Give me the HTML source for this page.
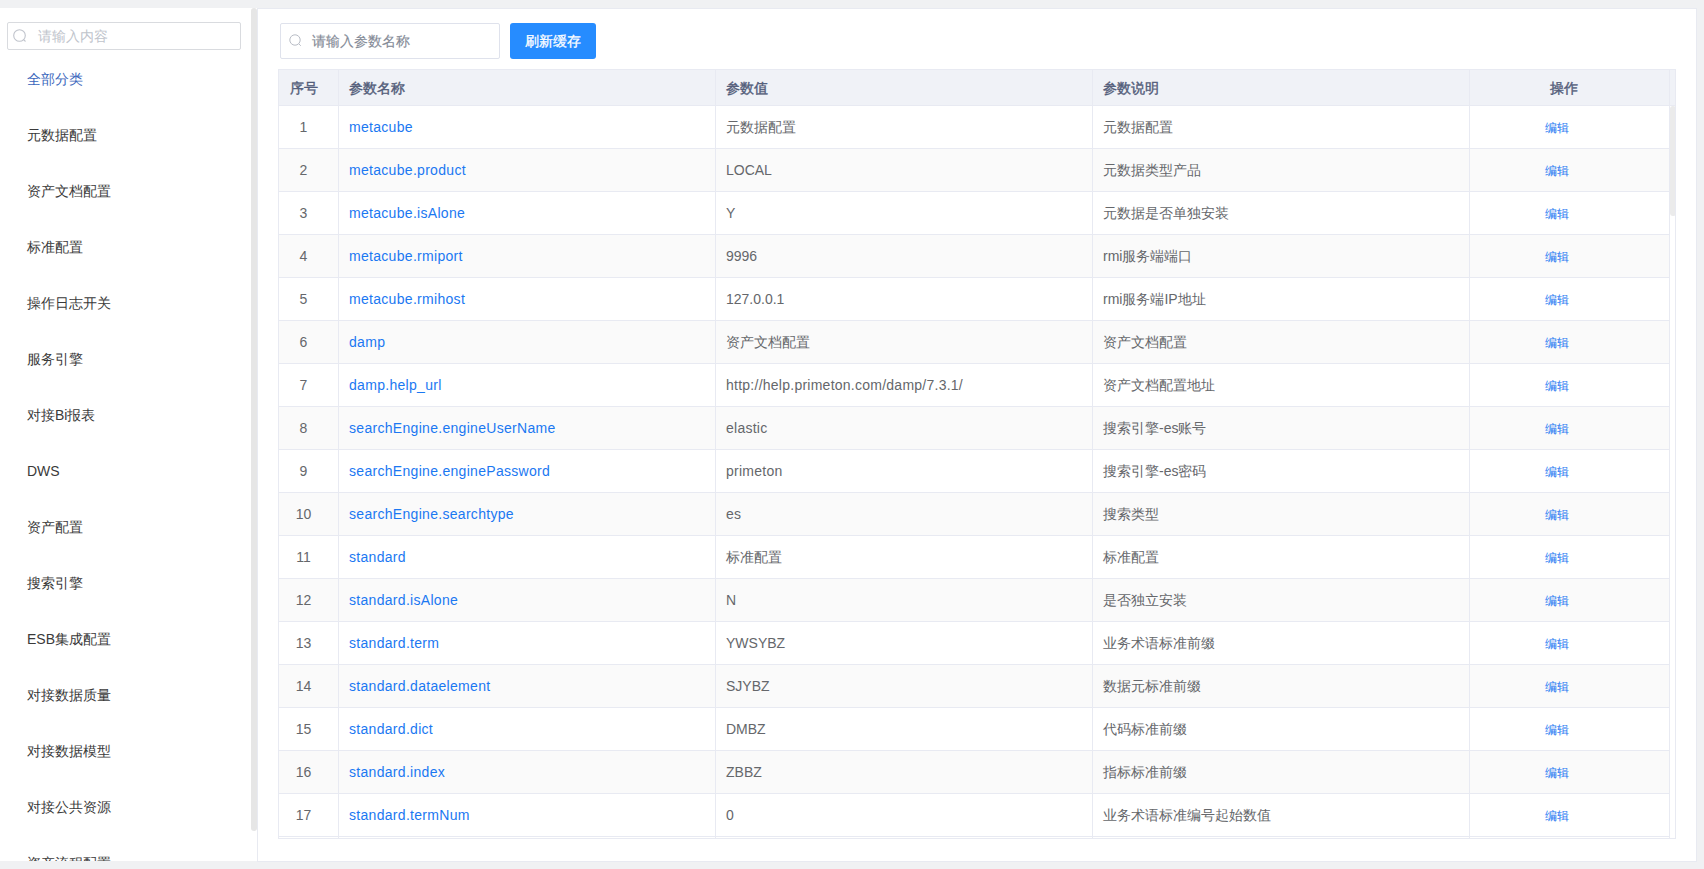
<!DOCTYPE html><html><head><meta charset="utf-8"><style>
*{margin:0;padding:0;box-sizing:border-box}
html,body{width:1704px;height:869px;overflow:hidden;background:#f0f1f3;font-family:"Liberation Sans",sans-serif;}
.a{position:absolute}
#side{left:0;top:8px;width:257px;height:853px;background:#fff;overflow:hidden}
#thumb{left:251px;top:8px;width:6px;height:823px;background:#e6e6e6;border-radius:3px}
#ssearch{left:7px;top:14px;width:234px;height:28px;border:1px solid #d9dbdf;border-radius:2px}
.ph{color:#c0c4cc;font-size:14px;line-height:20px;white-space:nowrap}
.si{font-size:14px;color:#3a3a3a;line-height:20px;white-space:nowrap;left:27px}
#main{left:257px;top:8px;width:1440px;height:854px;background:#fff;border:1px solid #e8eaf1}
#msearch{left:280px;top:23px;width:220px;height:36px;border:1px solid #dfe2ec;border-radius:2px;background:#fff}
#btn{left:510px;top:23px;width:86px;height:36px;background:#268cff;border-radius:3px;color:#fff;-webkit-text-stroke:0.3px #fff;font-size:14px;line-height:36px;text-align:center}
#tbl{left:278px;top:69px;width:1398px;height:770px;border:1px solid #e8eaf2;background:#fff;overflow:hidden}
.hd{left:0;top:0;width:1396px;height:36px;background:#f0f2f7;border-bottom:1px solid #e8eaf2}
.ht{font-size:14px;font-weight:400;-webkit-text-stroke:0.4px #535d7a;color:#535d7a;line-height:20px;white-space:nowrap;top:8px}
.row{left:0;width:1391px;height:43px;border-bottom:1px solid #e8eaf2}
.row.ev{background:#fafafa}
.vl{top:0;width:1px;background:#e8eaf2}
.c{font-size:14px;color:#65676b;line-height:20px;white-space:nowrap;top:11px}
.lk{color:#1b78f2;letter-spacing:0.3px}
.ls{letter-spacing:0.25px}
.ed{font-size:12px;color:#1b78f2;line-height:17px;top:14px}
</style></head><body>
<div id="side" class="a">
<div id="ssearch" class="a"><svg class="a" style="left:4px;top:5px" width="16" height="16" viewBox="0 0 16 16"><circle cx="7.5" cy="7.5" r="5.8" fill="none" stroke="#c0c4cc" stroke-width="1.1"/><line x1="11.6" y1="11.6" x2="13.5" y2="13.5" stroke="#c0c4cc" stroke-width="1.1"/></svg><div class="a ph" style="left:30px;top:3px">请输入内容</div></div>
<div class="a si" style="top:61px;color:#3b67bc">全部分类</div>
<div class="a si" style="top:117px">元数据配置</div>
<div class="a si" style="top:173px">资产文档配置</div>
<div class="a si" style="top:229px">标准配置</div>
<div class="a si" style="top:285px">操作日志开关</div>
<div class="a si" style="top:341px">服务引擎</div>
<div class="a si" style="top:397px">对接Bi报表</div>
<div class="a si" style="top:453px">DWS</div>
<div class="a si" style="top:509px">资产配置</div>
<div class="a si" style="top:565px">搜索引擎</div>
<div class="a si" style="top:621px">ESB集成配置</div>
<div class="a si" style="top:677px">对接数据质量</div>
<div class="a si" style="top:733px">对接数据模型</div>
<div class="a si" style="top:789px">对接公共资源</div>
<div class="a si" style="top:845px">资产流程配置</div>
</div>
<div id="thumb" class="a"></div>
<div id="main" class="a"></div>
<div id="msearch" class="a"><svg class="a" style="left:8px;top:10px" width="14" height="14" viewBox="0 0 14 14"><circle cx="6" cy="6" r="5.2" fill="none" stroke="#b9bdc6" stroke-width="1"/><line x1="9.8" y1="9.8" x2="11.8" y2="11.8" stroke="#b9bdc6" stroke-width="1"/></svg><div class="a ph" style="left:31px;top:7px;color:#858b97;-webkit-text-stroke:0.15px #858b97">请输入参数名称</div></div>
<div id="btn" class="a">刷新缓存</div>
<div id="tbl" class="a">
<div class="a hd"></div>
<div class="a ht" style="left:11px">序号</div>
<div class="a ht" style="left:70px">参数名称</div>
<div class="a ht" style="left:447px">参数值</div>
<div class="a ht" style="left:824px">参数说明</div>
<div class="a ht" style="left:1271px">操作</div>
<div class="a row" style="top:36px">
<div class="a c" style="left:0;width:59px;text-align:center;padding-right:10px">1</div>
<div class="a c lk" style="left:70px">metacube</div>
<div class="a c" style="left:447px">元数据配置</div>
<div class="a c" style="left:824px">元数据配置</div>
<div class="a ed" style="left:1266px">编辑</div>
</div>
<div class="a row ev" style="top:79px">
<div class="a c" style="left:0;width:59px;text-align:center;padding-right:10px">2</div>
<div class="a c lk" style="left:70px">metacube.product</div>
<div class="a c" style="left:447px">LOCAL</div>
<div class="a c" style="left:824px">元数据类型产品</div>
<div class="a ed" style="left:1266px">编辑</div>
</div>
<div class="a row" style="top:122px">
<div class="a c" style="left:0;width:59px;text-align:center;padding-right:10px">3</div>
<div class="a c lk" style="left:70px">metacube.isAlone</div>
<div class="a c" style="left:447px">Y</div>
<div class="a c" style="left:824px">元数据是否单独安装</div>
<div class="a ed" style="left:1266px">编辑</div>
</div>
<div class="a row ev" style="top:165px">
<div class="a c" style="left:0;width:59px;text-align:center;padding-right:10px">4</div>
<div class="a c lk" style="left:70px">metacube.rmiport</div>
<div class="a c" style="left:447px">9996</div>
<div class="a c" style="left:824px">rmi服务端端口</div>
<div class="a ed" style="left:1266px">编辑</div>
</div>
<div class="a row" style="top:208px">
<div class="a c" style="left:0;width:59px;text-align:center;padding-right:10px">5</div>
<div class="a c lk" style="left:70px">metacube.rmihost</div>
<div class="a c" style="left:447px">127.0.0.1</div>
<div class="a c" style="left:824px">rmi服务端IP地址</div>
<div class="a ed" style="left:1266px">编辑</div>
</div>
<div class="a row ev" style="top:251px">
<div class="a c" style="left:0;width:59px;text-align:center;padding-right:10px">6</div>
<div class="a c lk" style="left:70px">damp</div>
<div class="a c" style="left:447px">资产文档配置</div>
<div class="a c" style="left:824px">资产文档配置</div>
<div class="a ed" style="left:1266px">编辑</div>
</div>
<div class="a row" style="top:294px">
<div class="a c" style="left:0;width:59px;text-align:center;padding-right:10px">7</div>
<div class="a c lk" style="left:70px">damp.help_url</div>
<div class="a c ls" style="left:447px">http://help.primeton.com/damp/7.3.1/</div>
<div class="a c" style="left:824px">资产文档配置地址</div>
<div class="a ed" style="left:1266px">编辑</div>
</div>
<div class="a row ev" style="top:337px">
<div class="a c" style="left:0;width:59px;text-align:center;padding-right:10px">8</div>
<div class="a c lk" style="left:70px">searchEngine.engineUserName</div>
<div class="a c ls" style="left:447px">elastic</div>
<div class="a c" style="left:824px">搜索引擎-es账号</div>
<div class="a ed" style="left:1266px">编辑</div>
</div>
<div class="a row" style="top:380px">
<div class="a c" style="left:0;width:59px;text-align:center;padding-right:10px">9</div>
<div class="a c lk" style="left:70px">searchEngine.enginePassword</div>
<div class="a c ls" style="left:447px">primeton</div>
<div class="a c" style="left:824px">搜索引擎-es密码</div>
<div class="a ed" style="left:1266px">编辑</div>
</div>
<div class="a row ev" style="top:423px">
<div class="a c" style="left:0;width:59px;text-align:center;padding-right:10px">10</div>
<div class="a c lk" style="left:70px">searchEngine.searchtype</div>
<div class="a c ls" style="left:447px">es</div>
<div class="a c" style="left:824px">搜索类型</div>
<div class="a ed" style="left:1266px">编辑</div>
</div>
<div class="a row" style="top:466px">
<div class="a c" style="left:0;width:59px;text-align:center;padding-right:10px">11</div>
<div class="a c lk" style="left:70px">standard</div>
<div class="a c" style="left:447px">标准配置</div>
<div class="a c" style="left:824px">标准配置</div>
<div class="a ed" style="left:1266px">编辑</div>
</div>
<div class="a row ev" style="top:509px">
<div class="a c" style="left:0;width:59px;text-align:center;padding-right:10px">12</div>
<div class="a c lk" style="left:70px">standard.isAlone</div>
<div class="a c" style="left:447px">N</div>
<div class="a c" style="left:824px">是否独立安装</div>
<div class="a ed" style="left:1266px">编辑</div>
</div>
<div class="a row" style="top:552px">
<div class="a c" style="left:0;width:59px;text-align:center;padding-right:10px">13</div>
<div class="a c lk" style="left:70px">standard.term</div>
<div class="a c" style="left:447px">YWSYBZ</div>
<div class="a c" style="left:824px">业务术语标准前缀</div>
<div class="a ed" style="left:1266px">编辑</div>
</div>
<div class="a row ev" style="top:595px">
<div class="a c" style="left:0;width:59px;text-align:center;padding-right:10px">14</div>
<div class="a c lk" style="left:70px">standard.dataelement</div>
<div class="a c" style="left:447px">SJYBZ</div>
<div class="a c" style="left:824px">数据元标准前缀</div>
<div class="a ed" style="left:1266px">编辑</div>
</div>
<div class="a row" style="top:638px">
<div class="a c" style="left:0;width:59px;text-align:center;padding-right:10px">15</div>
<div class="a c lk" style="left:70px">standard.dict</div>
<div class="a c" style="left:447px">DMBZ</div>
<div class="a c" style="left:824px">代码标准前缀</div>
<div class="a ed" style="left:1266px">编辑</div>
</div>
<div class="a row ev" style="top:681px">
<div class="a c" style="left:0;width:59px;text-align:center;padding-right:10px">16</div>
<div class="a c lk" style="left:70px">standard.index</div>
<div class="a c" style="left:447px">ZBBZ</div>
<div class="a c" style="left:824px">指标标准前缀</div>
<div class="a ed" style="left:1266px">编辑</div>
</div>
<div class="a row" style="top:724px">
<div class="a c" style="left:0;width:59px;text-align:center;padding-right:10px">17</div>
<div class="a c lk" style="left:70px">standard.termNum</div>
<div class="a c" style="left:447px">0</div>
<div class="a c" style="left:824px">业务术语标准编号起始数值</div>
<div class="a ed" style="left:1266px">编辑</div>
</div>
<div class="a vl" style="left:59px;height:768px"></div>
<div class="a vl" style="left:436px;height:768px"></div>
<div class="a vl" style="left:813px;height:768px"></div>
<div class="a vl" style="left:1190px;height:768px"></div>
<div class="a vl" style="left:1390px;height:768px"></div>
<div class="a" style="left:1391px;top:36px;width:6px;height:110px;background:#ebebeb;border-radius:3px"></div>
</div>
</body></html>
